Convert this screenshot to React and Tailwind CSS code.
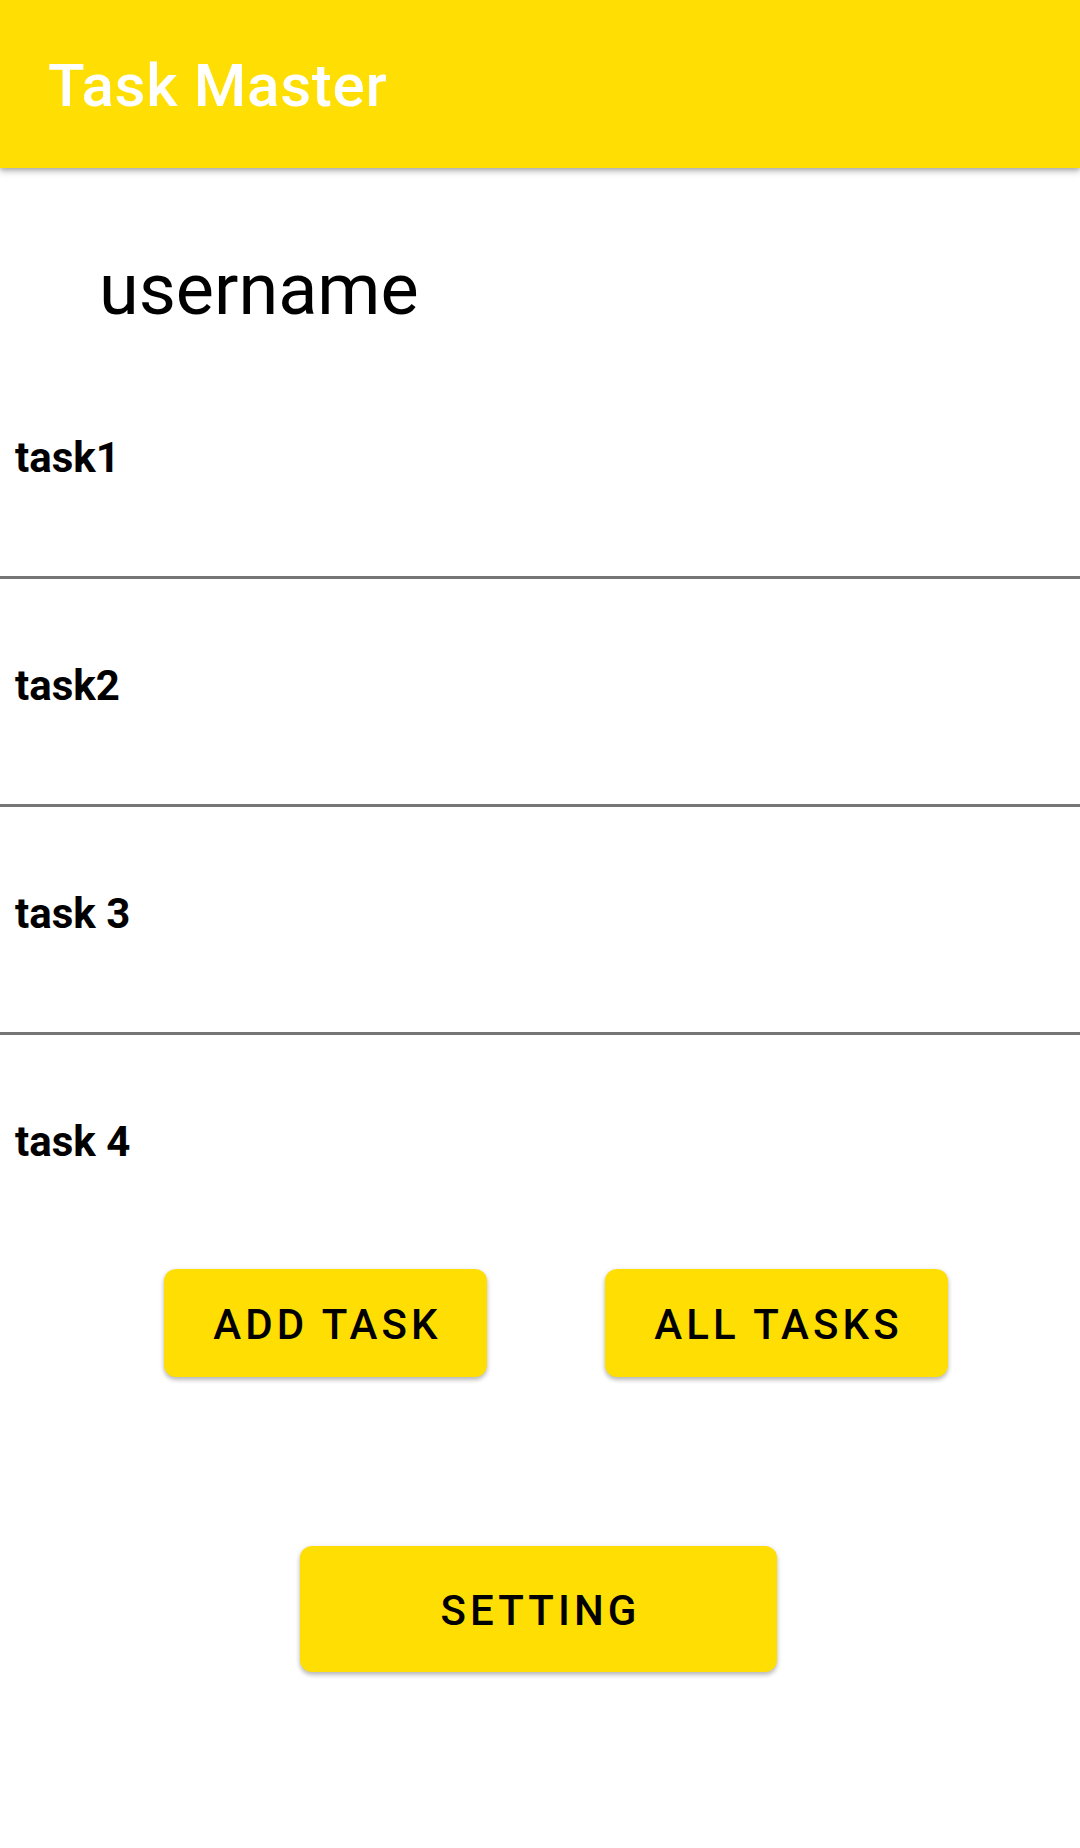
export default function App() {
  const tasks = ["task1", "task2", "task 3", "task 4"];
  return (
    <div className="w-[1080px] h-[1848px] bg-white font-['Roboto',sans-serif] overflow-hidden">
      <div className="relative z-10 h-[168px] bg-[#FFDE03] shadow-[0_4px_6px_rgba(0,0,0,0.22),0_2px_3px_rgba(0,0,0,0.12)] pl-[48px] pt-[51px]">
        <h1 className="text-[60px] leading-[70px] font-medium tracking-[0.75px] text-white">Task Master</h1>
      </div>
      <div className="h-[183px] pl-[99px] pt-[80px]">
        <div className="text-[72px] leading-[84px] text-black">username</div>
      </div>
      <div className="flex flex-col">
        {tasks.map((t, i) => (
          <div key={t} className="flex flex-col">
            <div className="h-[225px] pl-[15px] pt-[82px]">
              <div className="text-[42px] leading-[49px] font-bold text-black">{t}</div>
            </div>
            {i < tasks.length - 1 && <div className="h-[3px] bg-[#767676]" />}
          </div>
        ))}
      </div>
      <div className="flex pt-[9px] pl-[164px] gap-[118px]">
        <button className="w-[323px] h-[108px] rounded-[12px] bg-[#FFDE03] shadow-[0_3px_4px_rgba(0,0,0,0.22),0_1px_6px_rgba(0,0,0,0.1)] flex items-center justify-center pt-[3px] pl-[4px] text-[42px] leading-[49px] font-medium tracking-[4.1px] text-black">
          ADD TASK
        </button>
        <button className="w-[343px] h-[108px] rounded-[12px] bg-[#FFDE03] shadow-[0_3px_4px_rgba(0,0,0,0.22),0_1px_6px_rgba(0,0,0,0.1)] flex items-center justify-center pt-[3px] pl-[4px] text-[42px] leading-[49px] font-medium tracking-[4.1px] text-black">
          ALL TASKS
        </button>
      </div>
      <div className="flex pt-[169px] pl-[300px]">
        <button className="w-[477px] h-[126px] rounded-[12px] bg-[#FFDE03] shadow-[0_3px_4px_rgba(0,0,0,0.22),0_1px_6px_rgba(0,0,0,0.1)] flex items-center justify-center pt-[2px] pl-[4px] text-[42px] leading-[49px] font-medium tracking-[4.1px] text-black">
          SETTING
        </button>
      </div>
    </div>
  );
}
